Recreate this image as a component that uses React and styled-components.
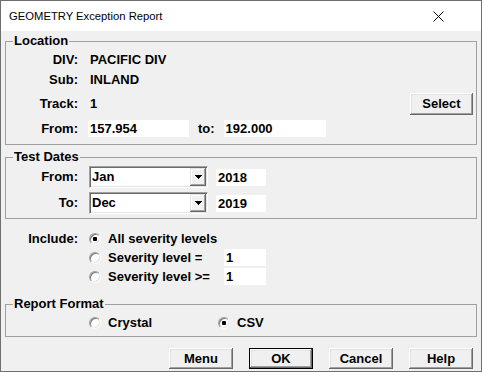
import React from 'react'
import styled, { createGlobalStyle } from 'styled-components'

const GlobalStyle = createGlobalStyle`
  html, body {
    margin: 0;
    padding: 0;
    background: #f0f0f0;
  }
  body {
    font-family: "Liberation Sans", Arial, sans-serif;
    color: #000;
  }
`

const Window = styled.div`
  width: 482px;
  height: 372px;
  box-sizing: border-box;
  border: 1px solid #6f6f6f;
  background: #f0f0f0;
  display: flex;
  flex-direction: column;
  overflow: hidden;
`

const TitleBar = styled.div`
  height: 30px;
  flex: none;
  background: #fff;
  display: flex;
  align-items: center;
  justify-content: space-between;
  padding-left: 8px;
  font-size: 11.25px;
`

const CloseBox = styled.div`
  width: 30px;
  height: 30px;
  margin-right: 28px;
  display: flex;
  align-items: center;
  justify-content: center;
`

const Body = styled.div`
  flex: 1;
  display: flex;
  flex-direction: column;
  padding: 2px 4px 0;
  font-size: 13px;
  font-weight: bold;
  line-height: 16px;
`

const Group = styled.fieldset`
  margin: ${p => p.$mt || 0}px 0 0;
  padding: 1px 0 ${p => p.$pb || 3}px;
  min-width: 0;
  border: 1px solid #a0a0a0;
`

const Legend = styled.legend`
  margin-left: 7px;
  padding: 0 1px;
  font-size: 13px;
  line-height: 16px;
  font-weight: bold;
`

const Row = styled.div`
  display: grid;
  grid-template-columns: 72px ${p => p.$cols || '1fr'};
  column-gap: 10px;
  align-items: center;
  height: ${p => p.$h}px;
  margin-top: ${p => p.$mt || 0}px;
`

const Label = styled.span`
  text-align: right;
  white-space: nowrap;
`

const Value = styled.span`
  padding-left: 2px;
  white-space: nowrap;
`

const Line = styled.div`
  display: flex;
  align-items: center;
`

const Field = styled.div`
  width: ${p => p.$w}px;
  height: 17px;
  margin-left: ${p => p.$ml || 0}px;
  background: #fff;
  box-sizing: border-box;
  padding-left: 2px;
  line-height: 17px;
  white-space: nowrap;
`

const ToLabel = styled.span`
  margin: 0 9px;
`

const Button = styled.button`
  width: ${p => p.$w || 64}px;
  height: ${p => p.$h || 21}px;
  padding: 0;
  box-sizing: border-box;
  border: ${p => (p.$default ? '1px solid #000' : 'none')};
  background: #f0f0f0;
  font-family: inherit;
  font-size: 13px;
  font-weight: bold;
  color: #000;
  box-shadow: inset -1px -1px 0 #696969, inset 1px 1px 0 #fff,
    inset -2px -2px 0 #a0a0a0, inset 2px 2px 0 #e3e3e3;
  margin-right: ${p => p.$mr || 0}px;
`

const Combo = styled.div`
  width: 119px;
  height: 22px;
  margin-left: 1px;
  box-sizing: border-box;
  background: #fff;
  border: 1px solid;
  border-color: #a0a0a0 #fff #fff #a0a0a0;
  box-shadow: inset 1px 1px 0 #696969, inset -1px -1px 0 #e3e3e3;
  padding: 1px;
  display: flex;
  align-items: center;
`

const ComboText = styled.span`
  flex: 1;
  padding-left: 1px;
`

const DropButton = styled.div`
  width: 16px;
  height: 18px;
  background: #f0f0f0;
  box-shadow: inset -1px -1px 0 #696969, inset 1px 1px 0 #e3e3e3,
    inset -2px -2px 0 #a0a0a0, inset 2px 2px 0 #fff;
  display: flex;
  align-items: center;
  justify-content: center;
`

const Section = styled.div`
  margin-top: ${p => p.$mt || 0}px;
  padding-left: 1px;
`

const Option = styled.label`
  display: flex;
  align-items: center;
  gap: 7px;
  margin-left: 1px;
  white-space: nowrap;
`

const RadioMark = styled.span`
  width: 12px;
  height: 12px;
  flex: none;
  box-sizing: border-box;
  border-radius: 50%;
  border: 1px solid;
  border-color: #a0a0a0 #f8f8f8 #f8f8f8 #a0a0a0;
  background: #fff;
  box-shadow: inset 1px 1px 0 #7a7a7a, inset -1px -1px 0 #e3e3e3;
  display: flex;
  align-items: center;
  justify-content: center;
  &::after {
    content: '';
    width: 4px;
    height: 4px;
    border-radius: 1px;
    background: ${p => (p.$checked ? '#000' : 'transparent')};
  }
`

const OptionGrid = styled.div`
  display: grid;
  grid-template-columns: ${p => p.$first}px auto;
  align-items: center;
`

const ButtonBar = styled.div`
  display: flex;
  justify-content: flex-end;
  gap: 16px;
  margin-top: 11px;
  padding-right: 4px;
`

const Radio = ({ checked, children }) => (
  <Option>
    <RadioMark $checked={checked} />
    {children}
  </Option>
)

const ComboBox = ({ value }) => (
  <Combo>
    <ComboText>{value}</ComboText>
    <DropButton>
      <svg width="7" height="4" viewBox="0 0 7 4" shapeRendering="crispEdges">
        <path d="M0 0h7v1H6v1H5v1H4v1H3V3H2V2H1V1H0z" fill="#000" />
      </svg>
    </DropButton>
  </Combo>
)

export default function App() {
  return (
    <Window>
      <GlobalStyle />
      <TitleBar>
        <span>GEOMETRY Exception Report</span>
        <CloseBox>
          <svg width="11" height="11" viewBox="0 0 11 11">
            <path d="M0.5 0.5L10.5 10.5M10.5 0.5L0.5 10.5" stroke="#000" strokeWidth="1" />
          </svg>
        </CloseBox>
      </TitleBar>
      <Body>
        <Group $pb={4}>
          <Legend>Location</Legend>
          <Row $h={20}>
            <Label>DIV:</Label>
            <Value>PACIFIC DIV</Value>
          </Row>
          <Row $h={20}>
            <Label>Sub:</Label>
            <Value>INLAND</Value>
          </Row>
          <Row $h={27} $cols="1fr auto">
            <Label>Track:</Label>
            <Value>1</Value>
            <Button $w={63} $h={22} $mr={3}>Select</Button>
          </Row>
          <Row $h={23}>
            <Label>From:</Label>
            <Line>
              <Field $w={101}>157.954</Field>
              <ToLabel>to:</ToLabel>
              <Field $w={102}>192.000</Field>
            </Line>
          </Row>
        </Group>

        <Group $mt={4} $pb={4}>
          <Legend>Test Dates</Legend>
          <Row $h={22}>
            <Label>From:</Label>
            <Line>
              <ComboBox value="Jan" />
              <Field $w={50} $ml={8}>2018</Field>
            </Line>
          </Row>
          <Row $h={22} $mt={4}>
            <Label>To:</Label>
            <Line>
              <ComboBox value="Dec" />
              <Field $w={50} $ml={8}>2019</Field>
            </Line>
          </Row>
        </Group>

        <Section $mt={10}>
          <Row $h={19}>
            <Label>Include:</Label>
            <Radio checked>All severity levels</Radio>
          </Row>
          <Row $h={19}>
            <span />
            <OptionGrid $first={136}>
              <Radio>Severity level =</Radio>
              <Field $w={42}>1</Field>
            </OptionGrid>
          </Row>
          <Row $h={19}>
            <span />
            <OptionGrid $first={136}>
              <Radio>Severity level &gt;=</Radio>
              <Field $w={42}>1</Field>
            </OptionGrid>
          </Row>
        </Section>

        <Group $mt={10} $pb={3}>
          <Legend>Report Format</Legend>
          <Row $h={20}>
            <span />
            <OptionGrid $first={129}>
              <Radio>Crystal</Radio>
              <Radio checked>CSV</Radio>
            </OptionGrid>
          </Row>
        </Group>

        <ButtonBar>
          <Button>Menu</Button>
          <Button $default>OK</Button>
          <Button>Cancel</Button>
          <Button>Help</Button>
        </ButtonBar>
      </Body>
    </Window>
  )
}
